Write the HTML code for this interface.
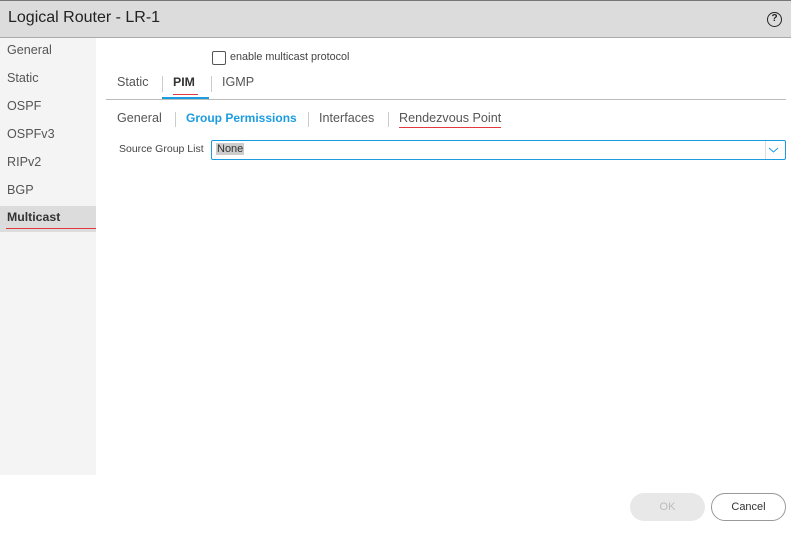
<!DOCTYPE html>
<html><head><style>
*{margin:0;padding:0;box-sizing:border-box}
body{width:791px;height:533px;background:#fff;font-family:"Liberation Sans",sans-serif;position:relative;overflow:hidden;color:#333}
.a{position:absolute;white-space:nowrap}
.t{font-size:12.6px;color:#555}
</style></head><body>
<div class="a" style="left:0;top:0;width:791px;height:1px;background:#777"></div>
<div class="a" style="left:0;top:1px;width:791px;height:36px;background:#dcdcdd"></div>
<div class="a" style="left:0;top:37px;width:791px;height:1px;background:#aaa"></div>
<div class="a" style="left:8px;top:9px;font-size:16px;color:#222">Logical Router - LR-1</div>
<div class="a" style="left:767px;top:12px;width:15px;height:15px;border:1.5px solid #222;border-radius:50%;font-size:10px;font-weight:bold;text-align:center;line-height:12px;color:#222">?</div>
<div class="a" style="left:0;top:38px;width:96px;height:437px;background:#f4f4f4"></div>
<div class="a t" style="left:7px;top:43px">General</div>
<div class="a t" style="left:7px;top:71px">Static</div>
<div class="a t" style="left:7px;top:99px">OSPF</div>
<div class="a t" style="left:7px;top:127px">OSPFv3</div>
<div class="a t" style="left:7px;top:155px">RIPv2</div>
<div class="a t" style="left:7px;top:183px">BGP</div>
<div class="a" style="left:0;top:206px;width:96px;height:26px;background:#dcdcdd"></div>
<div class="a" style="left:7px;top:210px;font-size:12.3px;font-weight:bold;color:#333">Multicast</div>
<div class="a" style="left:6px;top:228px;width:90px;height:1px;background:#e0393e"></div>
<div class="a" style="left:212px;top:51px;width:14px;height:14px;border:1px solid #555;border-radius:2px;background:#fff"></div>
<div class="a" style="left:230px;top:51px;font-size:10.8px;color:#444">enable multicast protocol</div>
<div class="a t" style="left:117px;top:75px">Static</div>
<div class="a" style="left:162px;top:76px;width:1px;height:16px;background:#ccc"></div>
<div class="a" style="left:173px;top:75px;font-size:12.3px;font-weight:bold;color:#333">PIM</div>
<div class="a" style="left:173px;top:94px;width:25px;height:1px;background:#e0393e"></div>
<div class="a" style="left:162px;top:97px;width:47px;height:2px;background:#1c9ce0"></div>
<div class="a" style="left:211px;top:76px;width:1px;height:16px;background:#ccc"></div>
<div class="a t" style="left:222px;top:75px">IGMP</div>
<div class="a" style="left:106px;top:99px;width:680px;height:1px;background:#bbb"></div>
<div class="a t" style="left:117px;top:111px">General</div>
<div class="a" style="left:175px;top:112px;width:1px;height:15px;background:#ccc"></div>
<div class="a" style="left:186px;top:111px;font-size:12px;font-weight:bold;color:#1c9ce0">Group Permissions</div>
<div class="a" style="left:308px;top:112px;width:1px;height:15px;background:#ccc"></div>
<div class="a t" style="left:319px;top:111px">Interfaces</div>
<div class="a" style="left:388px;top:112px;width:1px;height:15px;background:#ccc"></div>
<div class="a t" style="left:399px;top:111px">Rendezvous Point</div>
<div class="a" style="left:399px;top:127px;width:102px;height:1px;background:#e0393e"></div>
<div class="a" style="left:119px;top:143px;font-size:10.5px;color:#444">Source Group List</div>
<div class="a" style="left:211px;top:140px;width:575px;height:20px;border:1px solid #1c9ce0;border-radius:2px"></div>
<div class="a" style="left:216px;top:143px;font-size:11px;background:#ccc;color:#333;padding:0 1px">None</div>
<div class="a" style="left:765px;top:141px;width:1px;height:18px;background:#ddd"></div>
<svg class="a" style="left:768px;top:146px" width="11" height="8"><path d="M1 2 L5.5 6 L10 2" fill="none" stroke="#1c9ce0" stroke-width="1"/></svg>
<div class="a" style="left:630px;top:493px;width:75px;height:28px;background:#e8e8e9;border-radius:14px;font-size:11px;color:#bbb;text-align:center;line-height:28px">OK</div>
<div class="a" style="left:711px;top:493px;width:75px;height:28px;border:1px solid #999;border-radius:14px;font-size:11px;color:#333;text-align:center;line-height:26px">Cancel</div>
</body></html>
